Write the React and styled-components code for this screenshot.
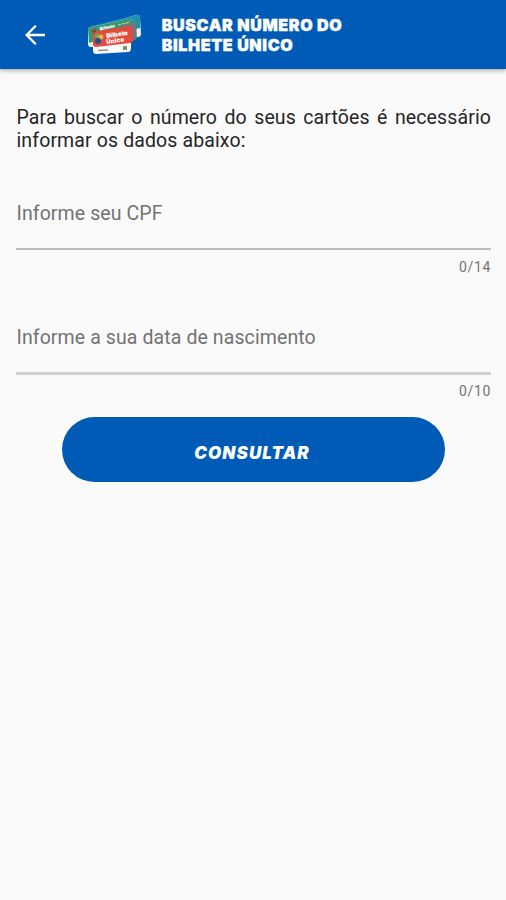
import React from "react";
import styled, { createGlobalStyle } from "styled-components";

const GlobalStyle = createGlobalStyle`
  * { box-sizing: border-box; }
  body { margin: 0; background: #fafafa; }
`;

const Screen = styled.div`
  width: 100%;
  min-height: 900px;
  background: #fafafa;
  font-family: Roboto, sans-serif;
`;

const AppBar = styled.header`
  display: flex;
  align-items: center;
  height: 69px;
  padding-left: 20px;
  background: #005bb7;
  box-shadow: 0 1px 5px rgba(0, 0, 0, 0.4);
`;

const BackButton = styled.button`
  display: flex;
  width: 30px;
  height: 30px;
  padding: 0;
  border: 0;
  background: none;
`;

const Logo = styled.svg`
  display: block;
  width: 56px;
  height: 44px;
  margin-left: 37px;
`;

const LogoText = styled.text`
  fill: #fff;
  font: 900 ${(p) => p.$size}px Inter, sans-serif;
`;

const Title = styled.h1`
  margin: 0 0 0 18.7px;
  padding-top: 2px;
  font: 900 16px/19.5px Inter, sans-serif;
  letter-spacing: 0.66px;
  color: #fff;
  white-space: nowrap;
  -webkit-text-stroke: 0.4px #fff;
`;

const Form = styled.main`
  display: flex;
  flex-direction: column;
  padding: 37px 15px 0 16px;
`;

const Intro = styled.p`
  margin: 0;
  padding-left: 0.5px;
  font-size: 19.5px;
  line-height: 23px;
  letter-spacing: 0.12px;
  text-align: justify;
  color: #262626;
`;

const Field = styled.label`
  display: flex;
  flex-direction: column;
  height: 124px;
  color: #737373;
`;

const FieldLabel = styled.span`
  height: 46px;
  padding-left: 0.5px;
  font-size: 19.5px;
  line-height: 24px;
  letter-spacing: 0.1px;
`;

const Underline = styled.span`
  height: ${(p) => p.$height}px;
  margin-bottom: ${(p) => 10 - p.$height}px;
  background: ${(p) => p.$color};
`;

const Counter = styled.span`
  align-self: flex-end;
  font-size: 14px;
  line-height: 18px;
  letter-spacing: 0.65px;
`;

const Fields = styled.div`
  margin-top: 50px;
  height: 215px;
`;

const SubmitButton = styled.button`
  align-self: center;
  width: 383px;
  height: 65px;
  padding: 7px 3px 0 0;
  border: 0;
  border-radius: 33px;
  background: #005bb7;
  color: #fff;
  font: italic 900 17px/20px Inter, sans-serif;
  letter-spacing: 1.1px;
`;

const BackArrow = () => (
  <svg width="30" height="30" viewBox="0 0 30 30" fill="none" stroke="#fff" strokeWidth="2.3">
    <path d="M25 15H7M15.8 5.8L6.6 15l9.2 9.2" />
  </svg>
);

const TicketLogo = () => (
  <Logo viewBox="0 0 56 44">
    <path d="M3 15L49 2q3-1 4 2l1 17q0 3-3 3L4 34q-2 0-2-3z" fill="#edf3f5" />
    <path d="M2 16q0-2 3-3L49 2q3-1 4 2v11L3 28z" fill="#218fb0" />
    <path d="M1 16q0-2 3-2l38-8q3-1 4 2l2 15-3 5-41 6q-3 0-3-3z" fill="#eef3ef" />
    <path d="M1 16q0-2 3-2l38-8q3-1 4 2l1 8L2 30z" fill="#349873" />
    <path d="M34 11l15-2 1 16-5 4z" fill="#697b7f" />
    <path d="M6 28l38-8v15q0 4-3 4l-32 2q-3 0-3-4z" fill="#fafafa" />
    <path d="M6 21q0-3 3-3l33-5q3 0 4 3v11q0 3-3 3L9 34q-3 0-3-3z" fill="#e34a3d" />
    <circle cx="10" cy="23" r="2.4" fill="#71a84c" />
    <circle cx="14" cy="24" r="2.4" fill="#e4bd3d" />
    <circle cx="11" cy="28" r="3" fill="#175695" />
    <LogoText $size={6.2} transform="translate(19.5 25) rotate(-8)">Bilhete</LogoText>
    <LogoText $size={6.2} transform="translate(19.5 31) rotate(-8)">Único</LogoText>
    <LogoText $size={4.4} transform="translate(13 17.5) rotate(-12)">Bilhete</LogoText>
    <path d="M31 12l12-3" strokeDasharray="3 1" stroke="#e8e2a0" strokeWidth="1.2" opacity=".8" />
    <path d="M5 17l4-1v3l-3 1z" fill="#a23a3a" />
    <path d="M11 37.5l10-.5" stroke="#929292" strokeWidth="1.3" />
    <path d="M36 33h4v4h-4z" fill="#85916f" />
  </Logo>
);

const fields = [
  { label: "Informe seu CPF", counter: "0/14", line: "#bdbdbd", height: 2 },
  { label: "Informe a sua data de nascimento", counter: "0/10", line: "#d0d0d0", height: 3 },
];

export default function App() {
  return (
    <Screen>
      <GlobalStyle />
      <AppBar>
        <BackButton aria-label="Voltar"><BackArrow /></BackButton>
        <TicketLogo />
        <Title>BUSCAR NÚMERO DO<br />BILHETE ÚNICO</Title>
      </AppBar>
      <Form>
        <Intro>Para buscar o número do seus cartões é necessário informar os dados abaixo:</Intro>
        <Fields>
          {fields.map((f) => (
            <Field key={f.label}>
              <FieldLabel>{f.label}</FieldLabel>
              <Underline $color={f.line} $height={f.height} />
              <Counter>{f.counter}</Counter>
            </Field>
          ))}
        </Fields>
        <SubmitButton>CONSULTAR</SubmitButton>
      </Form>
    </Screen>
  );
}
